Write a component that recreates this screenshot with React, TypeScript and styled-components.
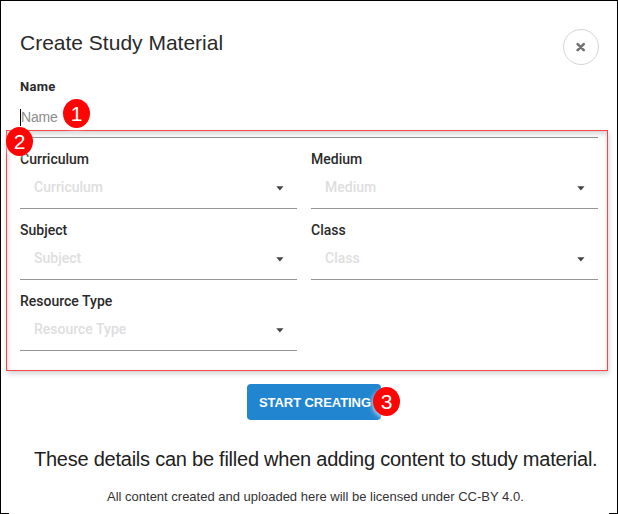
import React from 'react';
import styled, { createGlobalStyle } from 'styled-components';

const GlobalStyle = createGlobalStyle`
  * { box-sizing: border-box; }
  body { margin: 0; background: #fff; font-family: Roboto, "Liberation Sans", sans-serif; }
`;

const Modal = styled.main`
  position: relative;
  width: 618px;
  height: 514px;
  padding: 28px 19px 0;
  background: #fff;
  border: 1px solid #000;
  display: flex;
  flex-direction: column;
`;

const Header = styled.header`
  display: flex;
  justify-content: space-between;
  height: 36px;
`;

const Title = styled.h1`
  margin: 0;
  font: 400 21px/28px "Liberation Sans", sans-serif;
  color: #2a2a2a;
`;

const CloseButton = styled.button`
  width: 36px;
  height: 36px;
  margin-right: -1px;
  padding: 0;
  border: 1px solid #d4d4d4;
  border-radius: 50%;
  background: #fff;
  display: flex;
  align-items: center;
  justify-content: center;
`;

const Label = styled.label<{ $strong?: boolean }>`
  display: block;
  height: 18px;
  font: ${p => (p.$strong ? '700 13px/18px' : '500 14px/18px')} Roboto, sans-serif;
  letter-spacing: ${p => (p.$strong ? '0.3px' : '0')};
  color: #2a2a2a;
`;

const NameField = styled.section`
  height: 60px;
  margin-top: 13px;
  border-bottom: 1px solid #949494;
`;

const NameInput = styled.div`
  height: 17px;
  margin-top: 13px;
  display: flex;
  align-items: center;
  border-left: 1px solid #000;
  font: 400 14px/17px "Liberation Sans", sans-serif;
  letter-spacing: -0.2px;
  color: #8c8c8c;
`;

const Fields = styled.section`
  display: grid;
  grid-template-columns: 277px 287px;
  grid-auto-rows: 71px;
  column-gap: 14px;
`;

const Field = styled.div`
  padding-top: 12px;
  border-bottom: 1px solid #949494;
`;

const Select = styled.div`
  display: flex;
  align-items: center;
  justify-content: space-between;
  height: 40px;
  padding: 0 13px 0 14px;
  font: 500 14px/20px Roboto, sans-serif;
  color: #dedede;
`;

const Placeholder = styled.span`
  padding-bottom: 2px;
`;

const Actions = styled.div`
  display: flex;
  padding-left: 227px;
  margin-top: 33px;
`;

const StartButton = styled.button`
  width: 134px;
  height: 36px;
  padding: 0 0 0 12px;
  border: 0;
  border-radius: 4px;
  background: #2185d0;
  color: #fff;
  text-align: left;
  white-space: nowrap;
  font: 700 13px/37px "Liberation Sans", sans-serif;
  letter-spacing: -0.07px;
`;

const Note = styled.p`
  margin: 27px 0 0 14px;
  white-space: nowrap;
  font: 400 20px/24px "Liberation Sans", sans-serif;
  letter-spacing: -0.24px;
  color: #212121;
`;

const License = styled.footer`
  position: relative;
  margin: 13px -11px -1px;
  padding-left: 98px;
  flex: 1;
  background: #fff;
  white-space: nowrap;
  font: 400 13px/26px "Liberation Sans", sans-serif;
  color: #333;
`;

const Highlight = styled.div`
  position: absolute;
  left: 5px;
  top: 129px;
  width: 602px;
  height: 241px;
  border: 1px solid #fb4444;
  box-shadow: 1px 3px 5px rgba(0, 0, 0, 0.17), inset 1px 3px 5px rgba(0, 0, 0, 0.17);
  pointer-events: none;
`;

const Badge = styled.span<{ $x: number; $y: number }>`
  position: absolute;
  left: ${p => p.$x}px;
  top: ${p => p.$y}px;
  width: 27px;
  height: 29px;
  border-radius: 50%;
  background: #fe0505;
  box-shadow: -1px 2px 4px rgba(255, 255, 255, 0.6);
  color: #fff;
  text-align: center;
  font: 400 21px/30px "Liberation Sans", sans-serif;
`;

const Caret = () => (
  <svg width="8" height="5" viewBox="0 0 8 5" aria-hidden="true">
    <path d="M0.3 0.3h7.2L3.9 4.4z" fill="#444" />
  </svg>
);

const choices = ['Curriculum', 'Medium', 'Subject', 'Class', 'Resource Type'];

export default function App() {
  return (
    <>
      <GlobalStyle />
      <Modal>
        <Header>
          <Title>Create Study Material</Title>
          <CloseButton aria-label="Close">
            <svg width="10" height="10" viewBox="0 0 10 10">
              <path d="M1.7 2.2l6 6M7.7 2.2l-6 6" stroke="#707070" strokeWidth="2.6" strokeLinecap="round" />
            </svg>
          </CloseButton>
        </Header>
        <NameField>
          <Label $strong>Name</Label>
          <NameInput>Name</NameInput>
        </NameField>
        <Fields>
          {choices.map(name => (
            <Field key={name}>
              <Label>{name}</Label>
              <Select><Placeholder>{name}</Placeholder><Caret /></Select>
            </Field>
          ))}
        </Fields>
        <Actions><StartButton>START CREATING</StartButton></Actions>
        <Note>These details can be filled when adding content to study material.</Note>
        <License>All content created and uploaded here will be licensed under CC-BY 4.0.</License>
        <Highlight />
        <Badge $x={62} $y={98}>1</Badge>
        <Badge $x={5} $y={126}>2</Badge>
        <Badge $x={372} $y={386}>3</Badge>
      </Modal>
    </>
  );
}
